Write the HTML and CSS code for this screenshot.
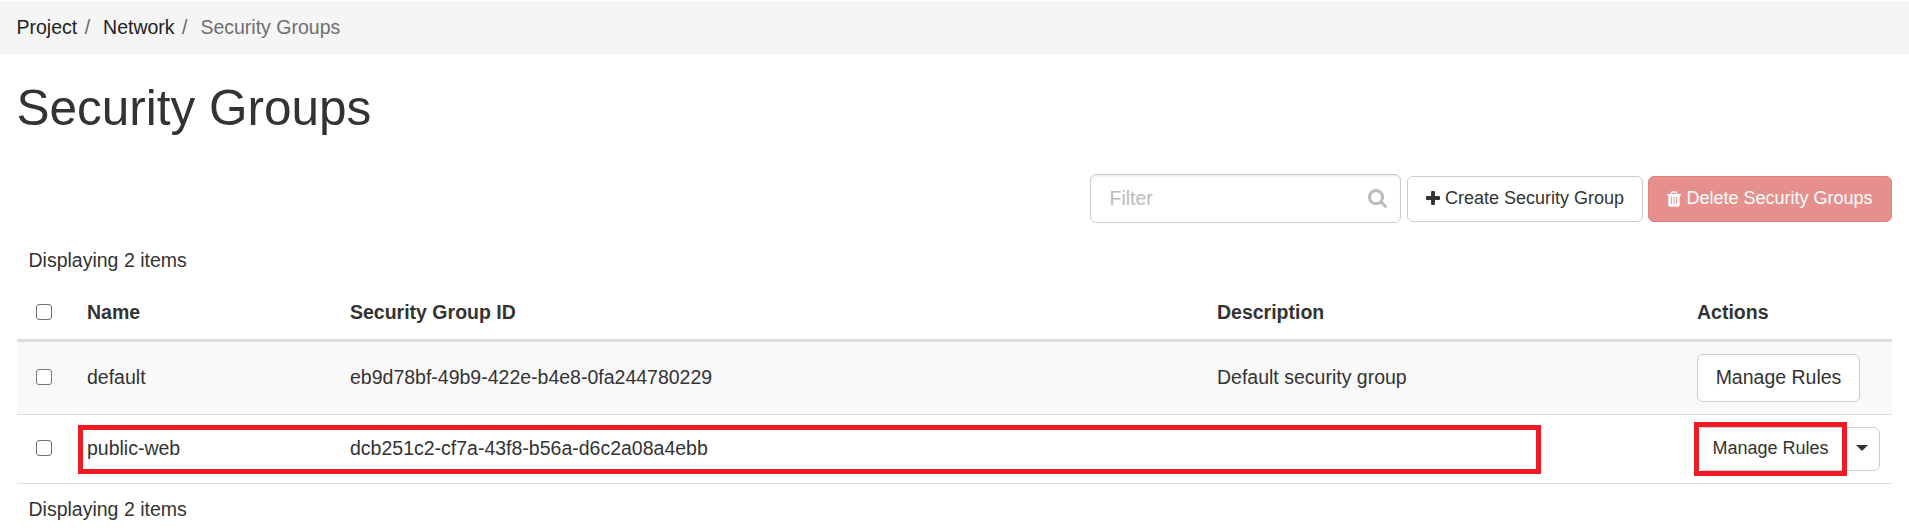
FILE: index.html
```html
<!DOCTYPE html>
<html lang="en">
<head>
<meta charset="utf-8">
<title>Security Groups</title>
<link rel="stylesheet" href="styles.css">
</head>
<body>
<ol class="breadcrumb">
  <li><a>Project</a></li>
  <li><a>Network</a></li>
  <li class="active">Security Groups</li>
</ol>
<main class="content">
  <h1 class="title">Security Groups</h1>
  <div class="toolbar">
    <div class="filter">
      <input class="filter-input" type="text" placeholder="Filter">
      <svg class="filter-icon" viewBox="0 0 1664 1664"><path fill="#bbb" d="M1152 704q0-185-131.500-316.500T704 256 387.500 387.500 256 704t131.500 316.500T704 1152t316.500-131.500T1152 704zm512 832q0 52-38 90t-90 38q-54 0-90-38l-343-342q-179 124-399 124-143 0-273.500-55.500t-225-150-150-225T0 704t55.500-273.500 150-225 225-150T704 0t273.500 55.500 225 150 150 225T1408 704q0 220-124 399l343 343q37 37 37 90z"/></svg>
    </div>
    <button class="btn btn-create"><svg class="plus" viewBox="0 0 1408 1408"><path fill="currentColor" d="M1408 608v192q0 40-28 68t-68 28H896v416q0 40-28 68t-68 28H608q-40 0-68-28t-28-68V896H96q-40 0-68-28t-28-68V608q0-40 28-68t68-28h416V96q0-40 28-68t68-28h192q40 0 68 28t28 68v416h416q40 0 68 28t28 68z"/></svg>Create Security Group</button>
    <button class="btn btn-delete"><svg class="trash" viewBox="0 0 1408 1536"><path fill="currentColor" d="M480 256h448l-48-117q-7-9-17-11H546q-10 2-17 11zm928 32v64q0 14-9 23t-23 9h-96v948q0 83-47 143.500t-113 60.500H288q-66 0-113-58.500T128 1336V384H32q-14 0-23-9t-9-23v-64q0-14 9-23t23-9h309l70-167q15-37 54-63t79-26h320q40 0 79 26t54 63l70 167h309q14 0 23 9t9 23z"/><path class="slits" d="M448 530v730M704 530v730M960 530v730"/></svg>Delete Security Groups</button>
  </div>
  <div class="count">Displaying 2 items</div>
  <table class="groups">
    <colgroup><col class="c-check"><col class="c-name"><col class="c-id"><col class="c-desc"><col></colgroup>
    <thead>
      <tr><th class="check"><span class="box"></span></th><th>Name</th><th>Security Group ID</th><th>Description</th><th>Actions</th></tr>
    </thead>
    <tbody>
      <tr class="odd"><td class="check"><span class="box"></span></td><td>default</td><td>eb9d78bf-49b9-422e-b4e8-0fa244780229</td><td>Default security group</td><td><button class="btn btn-rules">Manage Rules</button></td></tr>
      <tr class="even"><td class="check"><span class="box"></span></td><td class="marked">public-web<span class="mark mark-row"></span></td><td>dcb251c2-cf7a-43f8-b56a-d6c2a08a4ebb</td><td></td><td class="marked"><div class="btn-group"><button class="btn btn-main">Manage Rules</button><button class="btn btn-toggle"><span class="caret"></span></button></div><span class="mark mark-action"></span></td></tr>
    </tbody>
  </table>
  <div class="count count-foot">Displaying 2 items</div>
</main>
</body>
</html>
```
FILE: styles.css
```css
* { box-sizing: border-box; }
body {
  margin: 0;
  padding-top: 1px;
  background: #fff;
  color: #333;
  font-family: "Liberation Sans", Arial, sans-serif;
  font-size: 19.5px;
  line-height: 28px;
  overflow: hidden;
}
.breadcrumb {
  display: flex;
  align-items: center;
  height: 53px;
  margin: 0;
  padding: 0 16.5px 2px;
  list-style: none;
  background: #f5f5f5;
}
.breadcrumb a { color: #222; }
.breadcrumb li + li::before { content: "/\00a0"; padding: 0 7.5px; color: #666; }
.breadcrumb .active { color: #6f6f6f; }
.content { padding: 0 17px; }
.title {
  margin: 27px 0 0 -.6px;
  font-size: 49.5px;
  font-weight: 400;
  line-height: 54px;
}
.toolbar {
  display: flex;
  justify-content: flex-end;
  align-items: center;
  height: 49px;
  margin-top: 39px;
}
.filter { position: relative; width: 311px; height: 49px; margin-right: 6px; }
.filter-input {
  width: 100%;
  height: 100%;
  padding: 0 18.5px;
  border: 1px solid #ccc;
  border-radius: 6px;
  box-shadow: inset 0 1.5px 1.5px rgba(0, 0, 0, .075);
  color: #333;
  font: inherit;
}
.filter-input::placeholder { color: #bbb; opacity: 1; }
.filter-icon { position: absolute; right: 14px; top: 15px; width: 19px; height: 19px; }
.btn {
  display: flex;
  align-items: center;
  justify-content: center;
  padding: 0;
  border: 1px solid #ccc;
  border-radius: 6px;
  background: #fff;
  color: #333;
  font: 18px "Liberation Sans", Arial, sans-serif;
  white-space: nowrap;
}
.btn-create { width: 236px; height: 46px; margin-right: 5px; }
.btn-delete { width: 244px; height: 46px; border-color: #e3807d; background: #e6908d; color: #fff; }
.plus { width: 14px; height: 14px; margin: -2px 5px 0 0; }
.trash { width: 14px; height: 16px; margin-right: 5px; }
.slits { fill: none; stroke: #e6908d; stroke-width: 95; }
.count { height: 28px; margin-top: 23px; padding-left: 11.5px; }
.count-foot { margin-top: 11px; }
.groups {
  width: 1875px;
  margin-top: 11px;
  border-collapse: separate;
  border-spacing: 0;
  table-layout: fixed;
}
.c-check { width: 57px; }
.c-name { width: 263px; }
.c-id { width: 867px; }
.c-desc { width: 480px; }
.groups th, .groups td { padding: 0 0 0 13px; text-align: left; vertical-align: middle; }
.groups th { height: 57px; border-bottom: 3px solid #ddd; }
.groups td { height: 73px; padding-bottom: 2px; border-bottom: 1px solid #ddd; }
.groups .even td { height: 69px; }
.groups td:last-child { padding-bottom: 0; }
.odd td { background: #f9f9f9; }
.groups .check { padding-left: 19px; }
.box {
  display: block;
  width: 16px;
  height: 16px;
  border: 1.5px solid #767676;
  border-radius: 3px;
  background: #fff;
}
.btn-rules { width: 163px; height: 48px; padding-bottom: 2px; font-size: 19.5px; }
.btn-group { display: flex; }
.btn-main { width: 148px; height: 44px; padding-right: 1px; border-radius: 6px 0 0 6px; }
.btn-toggle { width: 36px; height: 44px; margin-left: -1px; padding-right: 1px; border-radius: 0 6px 6px 0; }
.btn-main, .btn-toggle { padding-bottom: 2px; }
.caret {
  border-top: 6px solid #333;
  border-left: 6px solid transparent;
  border-right: 6px solid transparent;
}
.marked { position: relative; }
/* Highlight frames drawn over the table */
.mark { position: absolute; z-index: 1; border: 5px solid #ed1c24; pointer-events: none; }
.mark-row { left: 4px; top: 10px; width: 1463px; height: 49px; }
.mark-action { left: 10px; top: 7px; width: 153px; height: 54px; }
```
